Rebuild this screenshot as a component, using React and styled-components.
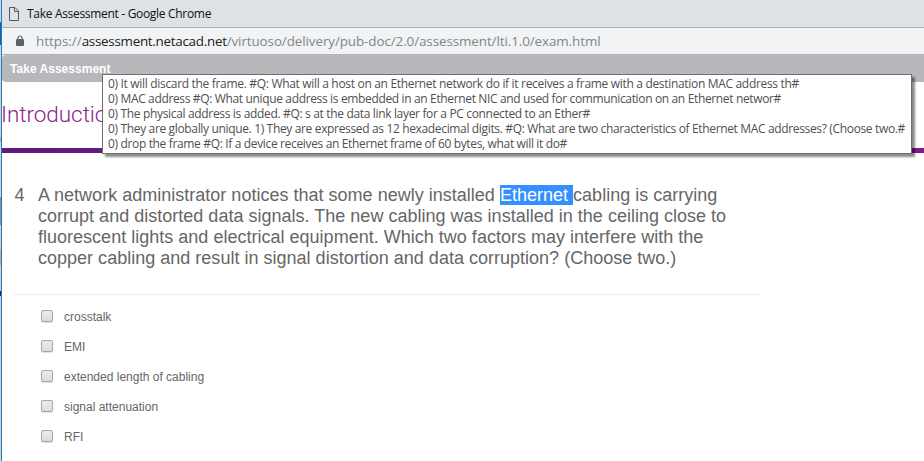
import React from "react";
import styled, { createGlobalStyle } from "styled-components";

const GlobalStyle = createGlobalStyle`
  * { box-sizing: border-box; }
  body { margin: 0; background: #fff; overflow: hidden; }
`;

const Screen = styled.div`
  display: flex;
  width: 924px;
  height: 461px;
  overflow: hidden;
  background: #fff;
`;

const DesktopEdge = styled.div`
  display: flex;
  flex-direction: column;
  flex: 0 0 1px;
  background: #d3d4d6;
`;

const EdgeSlice = styled.div`
  height: ${(p) => p.$h}px;
  background: ${(p) => p.$color};
`;

const BrowserWindow = styled.div`
  position: relative;
  flex: 1;
  min-width: 0;
  border-left: 1px solid #2179bf;
`;

const TitleBar = styled.div`
  display: flex;
  align-items: center;
  height: 28px;
  padding-left: 7px;
  gap: 8px;
  background: #dee1e6;
  border-bottom: 1px solid #adb0b2;
`;

const WindowTitle = styled.span`
  font: 12px/16px "Open Sans", sans-serif;
  letter-spacing: -0.31px;
  color: #111;
`;

const AddressBar = styled.div`
  display: flex;
  align-items: center;
  height: 27px;
  padding-left: 14px;
  background: #f1f3f4;
  border-bottom: 1px solid #b1b3b5;
`;

const Url = styled.span`
  margin-left: 12px;
  font: 13.4px/18px "Open Sans", sans-serif;
  white-space: pre;
  color: #80868b;
`;

const UrlPart = styled.span`
  letter-spacing: ${(p) => p.$spacing}px;
  color: ${(p) => (p.$host ? "#202124" : "#80868b")};
`;

const AssessmentBar = styled.div`
  height: 27px;
  padding: 1px 8px 0;
  border-radius: 4px 0 0 4px;
  background: #b7b8bb;
  color: #fff;
  font: bold 12px/26px "Liberation Sans", Arial, sans-serif;
  letter-spacing: 0.03px;
`;

const ChapterHeader = styled.header`
  height: 71px;
  padding-top: 17px;
  border-bottom: 5px solid #7b1a8b;
  border-image: linear-gradient(90deg, #5d1a7f, #86198f) 1;
  border-width: 0 0 5px;
`;

const ChapterTitle = styled.h1`
  margin: 0 0 0 -1px;
  font: 300 22.5px/30px Roboto, sans-serif;
  letter-spacing: -0.05px;
  color: #8a1c8f;
`;

const Question = styled.section`
  display: flex;
  width: 745px;
  height: 142px;
  margin-left: 12px;
  padding-top: 32px;
  border-bottom: 1px solid #ebebeb;
  color: #666;
  font: 18px/21px "Liberation Sans", Arial, sans-serif;
`;

const QuestionNumber = styled.span`
  width: 24px;
  padding-left: 0.5px;
`;

const QuestionText = styled.div`
  letter-spacing: 0.012px;
`;

const QuestionLine = styled.div`
  display: flex;
  height: 21px;
  white-space: pre;
`;

const Highlight = styled.span`
  height: 20px;
  background: #3390ff;
  color: #fff;
`;

const Options = styled.ul`
  list-style: none;
  margin: 0;
  padding: 6px 0 0 39px;
`;

const Option = styled.li`
  display: flex;
  align-items: center;
  gap: 11px;
  height: 30px;
  color: #666;
  font: 12px/16px "Liberation Sans", Arial, sans-serif;
`;

const Checkbox = styled.span`
  width: 12px;
  height: 12px;
  margin-top: -1px;
  border: 1px solid #a6a6a6;
  border-radius: 2px;
  background: linear-gradient(#ececec, #dcdcdc);
  box-shadow: 0 1px 1px rgba(0, 0, 0, 0.12);
`;

const OptionLabel = styled.span`
  padding-top: 1px;
`;

const Tooltip = styled.div`
  position: absolute;
  top: 74px;
  left: 100px;
  width: 810px;
  height: 80px;
  padding: 1px 0 0 5px;
  border: 1px solid #707070;
  background: #fff;
  box-shadow: 3px 3px 2px rgba(0, 0, 0, 0.45);
  font: 12px/15px "Open Sans", sans-serif;
  color: #505050;
`;

const TooltipLine = styled.div`
  height: 15px;
  white-space: pre;
  letter-spacing: ${(p) => p.$spacing}px;
`;

const edge = [
  [22, "#d3d4d6"],
  [23, "#1565ad"],
  [92, "#d3d4d6"],
  [5, "#a9abb0"],
  [55, "#d3d4d6"],
  [28, "#8a9099"],
  [24, "#d3d4d6"],
  [16, "#d9a58a"],
  [26, "#d3d4d6"],
  [5, "#4c1168"],
];

const options = [
  "crosstalk",
  "EMI",
  "extended length of cabling",
  "signal attenuation",
  "RFI",
];

const tips = [
  ["0) It will discard the frame. #Q: What will a host on an Ethernet network do if it receives a frame with a destination MAC address th#", -0.318],
  ["0) MAC address #Q: What unique address is embedded in an Ethernet NIC and used for communication on an Ethernet networ#", -0.352],
  ["0) The physical address is added. #Q: s at the data link layer for a PC connected to an Ether#", -0.337],
  ["0) They are globally unique. 1) They are expressed as 12 hexadecimal digits. #Q: What are two characteristics of Ethernet MAC addresses? (Choose two.#", -0.347],
  ["0) drop the frame #Q: If a device receives an Ethernet frame of 60 bytes, what will it do#", -0.347],
];

function PageIcon() {
  return (
    <svg width="10" height="14" viewBox="0 0 10 14" fill="none" stroke="#55585c">
      <path d="M.5.5h5.5l3.5 3.5v9.5h-9zM5.5.5v4h4" />
    </svg>
  );
}

function LockIcon() {
  return (
    <svg width="8" height="12" viewBox="0 0 8 12">
      <path d="M2 5V3a2 2 0 0 1 4 0v2" fill="none" stroke="#5f6368" strokeWidth="1.2" />
      <rect y="4" width="8" height="7" rx="1" fill="#5f6368" />
    </svg>
  );
}

export default function App() {
  return (
    <Screen>
      <GlobalStyle />
      <DesktopEdge>
        {edge.map(([h, color], i) => (
          <EdgeSlice key={i} $h={h} $color={color} />
        ))}
      </DesktopEdge>
      <BrowserWindow>
        <TitleBar>
          <PageIcon />
          <WindowTitle>Take Assessment - Google Chrome</WindowTitle>
        </TitleBar>
        <AddressBar>
          <LockIcon />
          <Url>
            <UrlPart $spacing={0}>https://</UrlPart>
            <UrlPart $host $spacing={-0.27}>assessment.netacad.net</UrlPart>
            <UrlPart $spacing={-0.08}>/virtuoso/delivery/pub-doc/2.0/assessment/lti.1.0/exam.html</UrlPart>
          </Url>
        </AddressBar>
        <AssessmentBar>Take Assessment</AssessmentBar>
        <ChapterHeader>
          <ChapterTitle>Introduction</ChapterTitle>
        </ChapterHeader>
        <Question>
          <QuestionNumber>4</QuestionNumber>
          <QuestionText>
            <QuestionLine>
              <span>{"A network administrator notices that some newly installed "}</span>
              <Highlight>{"Ethernet "}</Highlight>
              <span>cabling is carrying</span>
            </QuestionLine>
            <QuestionLine>corrupt and distorted data signals. The new cabling was installed in the ceiling close to</QuestionLine>
            <QuestionLine>fluorescent lights and electrical equipment. Which two factors may interfere with the</QuestionLine>
            <QuestionLine>copper cabling and result in signal distortion and data corruption? (Choose two.)</QuestionLine>
          </QuestionText>
        </Question>
        <Options>
          {options.map((label) => (
            <Option key={label}>
              <Checkbox />
              <OptionLabel>{label}</OptionLabel>
            </Option>
          ))}
        </Options>
        <Tooltip>
          {tips.map(([text, spacing]) => (
            <TooltipLine key={text} $spacing={spacing}>{text}</TooltipLine>
          ))}
        </Tooltip>
      </BrowserWindow>
    </Screen>
  );
}
